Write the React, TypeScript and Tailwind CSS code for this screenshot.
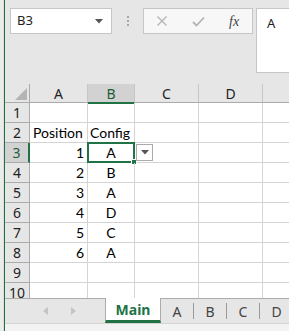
import React from "react";

const cols = [
  { key: "A", w: "w-[58px]" },
  { key: "B", w: "w-[47px]" },
  { key: "C", w: "w-[64px]" },
  { key: "D", w: "w-[64px]" },
];

const rows: { n: number; a?: string; b?: string }[] = [
  { n: 1 },
  { n: 2, a: "Position", b: "Config" },
  { n: 3, a: "1", b: "A" },
  { n: 4, a: "2", b: "B" },
  { n: 5, a: "3", b: "A" },
  { n: 6, a: "4", b: "D" },
  { n: 7, a: "5", b: "C" },
  { n: 8, a: "6", b: "A" },
  { n: 9 },
  { n: 10 },
];

const uiFont = { fontFamily: '"Noto Sans", "Open Sans", sans-serif' };
const cellFont = { fontFamily: 'Lato, "Liberation Sans", sans-serif' };

export default function App() {
  return (
    <div className="flex w-[289px] h-[331px] overflow-hidden bg-[#e6e6e6]">
      <div className="w-[4px] h-full shrink-0 bg-[#ececec] border-r border-[#dcdcdc]" />
      <div className="w-px h-full shrink-0 bg-[#217346]" />
      <div className="flex-1 flex flex-col min-w-0 overflow-hidden">
        {/* Toolbar */}
        <div className="h-[84px] shrink-0 bg-[#e6e6e6] flex items-start pt-[8px] pl-[5px] text-[#222]" style={uiFont}>
          <div className="w-[102px] h-[26px] shrink-0 bg-white border border-[#c6c6c6] flex items-center pl-[6px] pr-[8px] text-[13px]">
            <span className="flex-1">B3</span>
            <svg width="8" height="5" viewBox="0 0 8 5">
              <path d="M0 0 H8 L4 4.5 Z" fill="#555" />
            </svg>
          </div>
          <div className="w-[31px] h-[26px] shrink-0 flex flex-col items-center justify-center gap-[2px]">
            <div className="w-[2px] h-[2px] bg-[#a6a6a6]" />
            <div className="w-[2px] h-[2px] bg-[#a6a6a6]" />
            <div className="w-[2px] h-[2px] bg-[#a6a6a6]" />
          </div>
          <div className="w-[110px] h-[26px] shrink-0 bg-[#f7f7f7] border border-[#c6c6c6] flex items-center">
            <div className="w-[37px] flex justify-center">
              <svg width="12" height="12" viewBox="0 0 12 12">
                <path d="M1.5 1.5 L10.5 10.5 M10.5 1.5 L1.5 10.5" stroke="#b4b4b4" strokeWidth="1.3" />
              </svg>
            </div>
            <div className="w-[36px] flex justify-center">
              <svg width="13" height="11" viewBox="0 0 13 11">
                <path d="M1 6 L4.5 9.5 L12 1.5" stroke="#b4b4b4" strokeWidth="1.8" fill="none" />
              </svg>
            </div>
            <div className="w-[36px] flex justify-center">
              <span className="italic text-[14px] text-[#444]" style={{ fontFamily: '"Liberation Serif", serif' }}>
                fx
              </span>
            </div>
          </div>
          <div className="ml-[3px] w-[60px] h-[65px] shrink-0 bg-white border border-[#c6c6c6] pl-[10px] pt-[5px] text-[13px]">
            A
          </div>
        </div>

        {/* Grid */}
        <div className="h-[214px] shrink-0 overflow-hidden bg-white flex flex-col">
          {/* Header row */}
          <div className="flex h-[19px] shrink-0 bg-[#e6e6e6] border-b border-[#ababab] text-[14px] text-[#222]" style={uiFont}>
            <div className="w-[25px] shrink-0 border-r border-[#ababab] relative">
              <svg className="absolute left-[10px] top-[4px]" width="12" height="12" viewBox="0 0 12 12">
                <path d="M12 0 V12 H0 Z" fill="#b4b4b4" />
              </svg>
            </div>
            {cols.map((c) => (
              <div
                key={c.key}
                className={
                  c.key === "B"
                    ? `${c.w} shrink-0 flex items-center justify-center bg-[#d2d2d2] border-r border-[#c6c6c6] border-b-2 border-b-[#217346] text-[#1e5c38] h-[20px]`
                    : `${c.w} shrink-0 flex items-center justify-center border-r border-[#c6c6c6]`
                }
              >
                {c.key}
              </div>
            ))}
            <div className="flex-1" />
          </div>
          {rows.map((r) => {
            const sel = r.n === 3;
            return (
              <div key={r.n} className="flex h-[20px] shrink-0">
                <div
                  className={
                    sel
                      ? "w-[25px] shrink-0 flex items-center justify-center bg-[#d2d2d2] border-b border-[#ababab] border-r-2 border-r-[#217346] text-[14px] text-[#1e5c38]"
                      : "w-[25px] shrink-0 flex items-center justify-center bg-[#e6e6e6] border-b border-[#ababab] border-r border-r-[#ababab] text-[14px] text-[#222]"
                  }
                  style={uiFont}
                >
                  {r.n}
                </div>
                <div
                  className="w-[58px] shrink-0 border-r border-b border-[#d4d4d4] flex items-center justify-end pr-[3px] text-[14px] text-black"
                  style={cellFont}
                >
                  {r.n === 2 ? <span className="w-full text-left pl-[3px] whitespace-nowrap">{r.a}</span> : r.a}
                </div>
                <div
                  className="w-[47px] shrink-0 border-r border-b border-[#d4d4d4] flex items-center justify-center text-[14px] text-black relative"
                  style={cellFont}
                >
                  {r.n === 2 ? <span className="w-full text-left pl-[2px] whitespace-nowrap">{r.b}</span> : r.b}
                  {sel && (
                    <>
                      <div className="absolute -left-px -top-px w-[48px] h-[21px] border-2 border-[#217346]" />
                      <div className="absolute right-[-3px] bottom-[-3px] w-[6px] h-[6px] bg-[#217346] border border-white" />
                      <div className="absolute left-[48px] top-[1px] w-[17px] h-[17px] bg-white border border-[#ababab] flex items-center justify-center z-10">
                        <svg width="8" height="5" viewBox="0 0 8 5">
                          <path d="M0 0 H8 L4 4.5 Z" fill="#555" />
                        </svg>
                      </div>
                    </>
                  )}
                </div>
                <div className="w-[64px] shrink-0 border-r border-b border-[#d4d4d4]" />
                <div className="w-[64px] shrink-0 border-r border-b border-[#d4d4d4]" />
                <div className="flex-1 border-b border-[#d4d4d4]" />
              </div>
            );
          })}
        </div>

        {/* Tab bar */}
        <div className="h-[25px] shrink-0 flex bg-[#e6e6e6]" style={uiFont}>
          <div className="w-[100px] shrink-0 border-t border-[#ababab] flex items-center">
            <div className="w-[43px] flex justify-end">
              <svg width="5" height="8" viewBox="0 0 5 8">
                <path d="M5 0 V8 L0 4 Z" fill="#c4c4c4" />
              </svg>
            </div>
            <div className="w-[28px] flex justify-end">
              <svg width="5" height="8" viewBox="0 0 5 8">
                <path d="M0 0 V8 L5 4 Z" fill="#c4c4c4" />
              </svg>
            </div>
          </div>
          <div className="w-[56px] shrink-0 bg-white border-l border-r border-[#ababab] border-b-[3px] border-b-[#217346] flex items-center justify-center text-[14px] font-bold text-[#217346]">
            Main
          </div>
          {["A", "B", "C", "D"].map((t, i) => (
            <div key={t} className="w-[33px] shrink-0 border-t border-[#ababab] flex items-center">
              <div className="flex-1 text-center text-[14px] text-[#444]">{t}</div>
              {i < 3 && <div className="w-px h-[16px] bg-[#9a9a9a]" />}
            </div>
          ))}
          <div className="flex-1 border-t border-[#ababab]" />
        </div>
        <div className="flex-1 bg-[#f3f3f3] border-t border-[#d4d4d4]" />
      </div>
    </div>
  );
}
